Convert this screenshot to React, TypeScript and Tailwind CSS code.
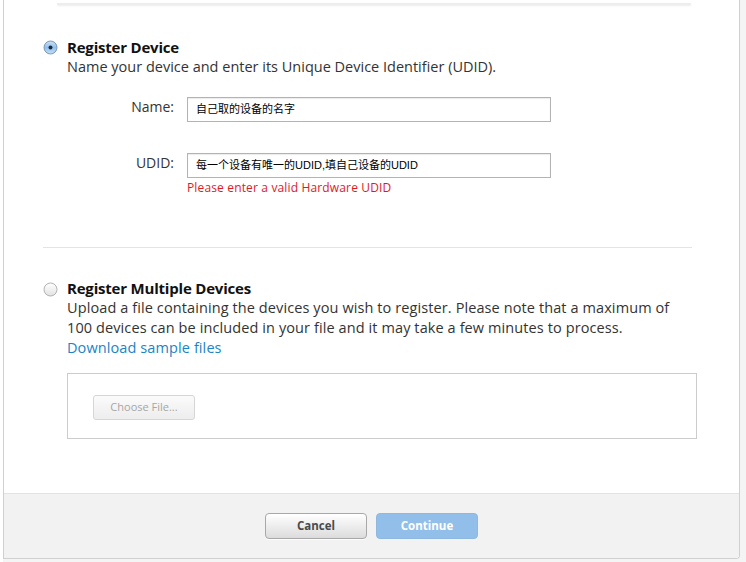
import React from "react";

const font = { fontFamily: '"Open Sans", "Liberation Sans", Arial, sans-serif' };
const cjk = { fontFamily: '"Liberation Sans", "Noto Sans CJK SC", sans-serif' };

function Radio({ checked }: { checked?: boolean }) {
  return (
    <svg width="15" height="15" viewBox="0 0 15 15" className="shrink-0">
      <defs>
        <linearGradient id={checked ? "rg1" : "rg2"} x1="0" y1="0" x2="0" y2="1">
          {checked ? (
            <>
              <stop offset="0" stopColor="#cfe3f7" />
              <stop offset="0.5" stopColor="#8fbfec" />
              <stop offset="1" stopColor="#c5e0fa" />
            </>
          ) : (
            <>
              <stop offset="0" stopColor="#ffffff" />
              <stop offset="1" stopColor="#e2e2e2" />
            </>
          )}
        </linearGradient>
      </defs>
      <circle cx="7.5" cy="7.5" r="6.5" fill={`url(#${checked ? "rg1" : "rg2"})`} stroke={checked ? "#6f8fb3" : "#a9a9a9"} strokeWidth="0.9" />
      {checked && <circle cx="7.5" cy="7.5" r="2" fill="#1d2a3a" />}
    </svg>
  );
}

export default function App() {
  return (
    <div className="w-[746px] h-[562px] bg-[#f4f4f4] overflow-hidden flex" style={font}>
      <div className="w-[3px] bg-white" />
      <div className="w-[737px] h-[559px] bg-white border-l border-r border-b border-[#d0d0d0] rounded-br-[4px] flex flex-col overflow-hidden">
        <div className="flex-1 flex flex-col">
          <div className="mt-[3px] ml-[53px] w-[634px] h-[2px] bg-[#ededed] shadow-[0_1px_2px_rgba(0,0,0,0.08)] rounded-full" />
          <div className="pl-[39px] pr-[47px] pt-[32px] flex flex-col">
            <div className="flex gap-[9px]">
              <div className="pt-[3px]"><Radio checked /></div>
              <div className="flex flex-col">
                <div className="text-[15px] leading-[20px] font-bold text-[#111] tracking-[-0.2px]">Register Device</div>
                <div className="text-[14.5px] leading-[20px] text-[#333]">Name your device and enter its Unique Device Identifier (UDID).</div>
                <div className="mt-[20px] flex items-start">
                  <div className="w-[107px] text-right text-[14px] leading-[20px] text-[#333]">Name:</div>
                  <div className="ml-[13px] w-[364px] h-[25px] border border-[#b3b3b3] shadow-[inset_0_1px_1px_rgba(0,0,0,0.08)] flex items-center pl-[8px] text-[11px] text-black" style={cjk}>自己取的设备的名字</div>
                </div>
                <div className="mt-[31px] flex items-start">
                  <div className="w-[107px] text-right text-[14px] leading-[20px] text-[#333]">UDID:</div>
                  <div className="ml-[13px] flex flex-col">
                    <div className="w-[364px] h-[25px] border border-[#b3b3b3] shadow-[inset_0_1px_1px_rgba(0,0,0,0.08)] flex items-center pl-[8px] text-[11px] text-black" style={cjk}>每一个设备有唯一的UDID,填自己设备的UDID</div>
                    <div className="text-[12px] leading-[20px] text-[#dd1a1f] tracking-[0.15px]">Please enter a valid Hardware UDID</div>
                  </div>
                </div>
              </div>
            </div>
            <div className="mt-[49px] h-px bg-[#e4e4e4]" />
            <div className="mt-[31px] flex gap-[9px]">
              <div className="pt-[3px]"><Radio /></div>
              <div className="flex flex-col flex-1">
                <div className="text-[15px] leading-[19px] font-bold text-[#111] tracking-[-0.2px]">Register Multiple Devices</div>
                <div className="text-[14.5px] leading-[20px] text-[#333] tracking-[0.1px]">
                  Upload a file containing the devices you wish to register. Please note that a maximum of
                  <br />
                  100 devices can be included in your file and it may take a few minutes to process.
                </div>
                <div className="text-[14.5px] leading-[20px] text-[#1a84c6] tracking-[0.1px]">Download sample files</div>
                <div className="mt-[15px] w-[630px] h-[66px] border border-[#cccccc] pl-[25px] pt-[21px]">
                  <div className="w-[102px] h-[25px] rounded-[3px] border border-[#d6d6d6] bg-gradient-to-b from-[#fbfbfb] to-[#ededed] flex items-center justify-center text-[11px] text-[#a6a6a6]">Choose File...</div>
                </div>
              </div>
            </div>
          </div>
        </div>
        <div className="h-[65px] bg-[#f2f2f2] border-t border-[#e3e3e3] flex items-center justify-center gap-[9px]">
          <div className="w-[102px] h-[26px] rounded-[4px] border border-[#a8a8a8] bg-gradient-to-b from-[#ffffff] to-[#dcdcdc] flex items-center justify-center text-[11.5px] font-bold text-[#4a4a4a] shadow-[0_1px_0_rgba(255,255,255,0.8)]">Cancel</div>
          <div className="w-[102px] h-[26px] rounded-[4px] border border-[#8fb8e0] bg-[#92bfe9] flex items-center justify-center text-[11.5px] font-bold text-white">Continue</div>
        </div>
      </div>
    </div>
  );
}
